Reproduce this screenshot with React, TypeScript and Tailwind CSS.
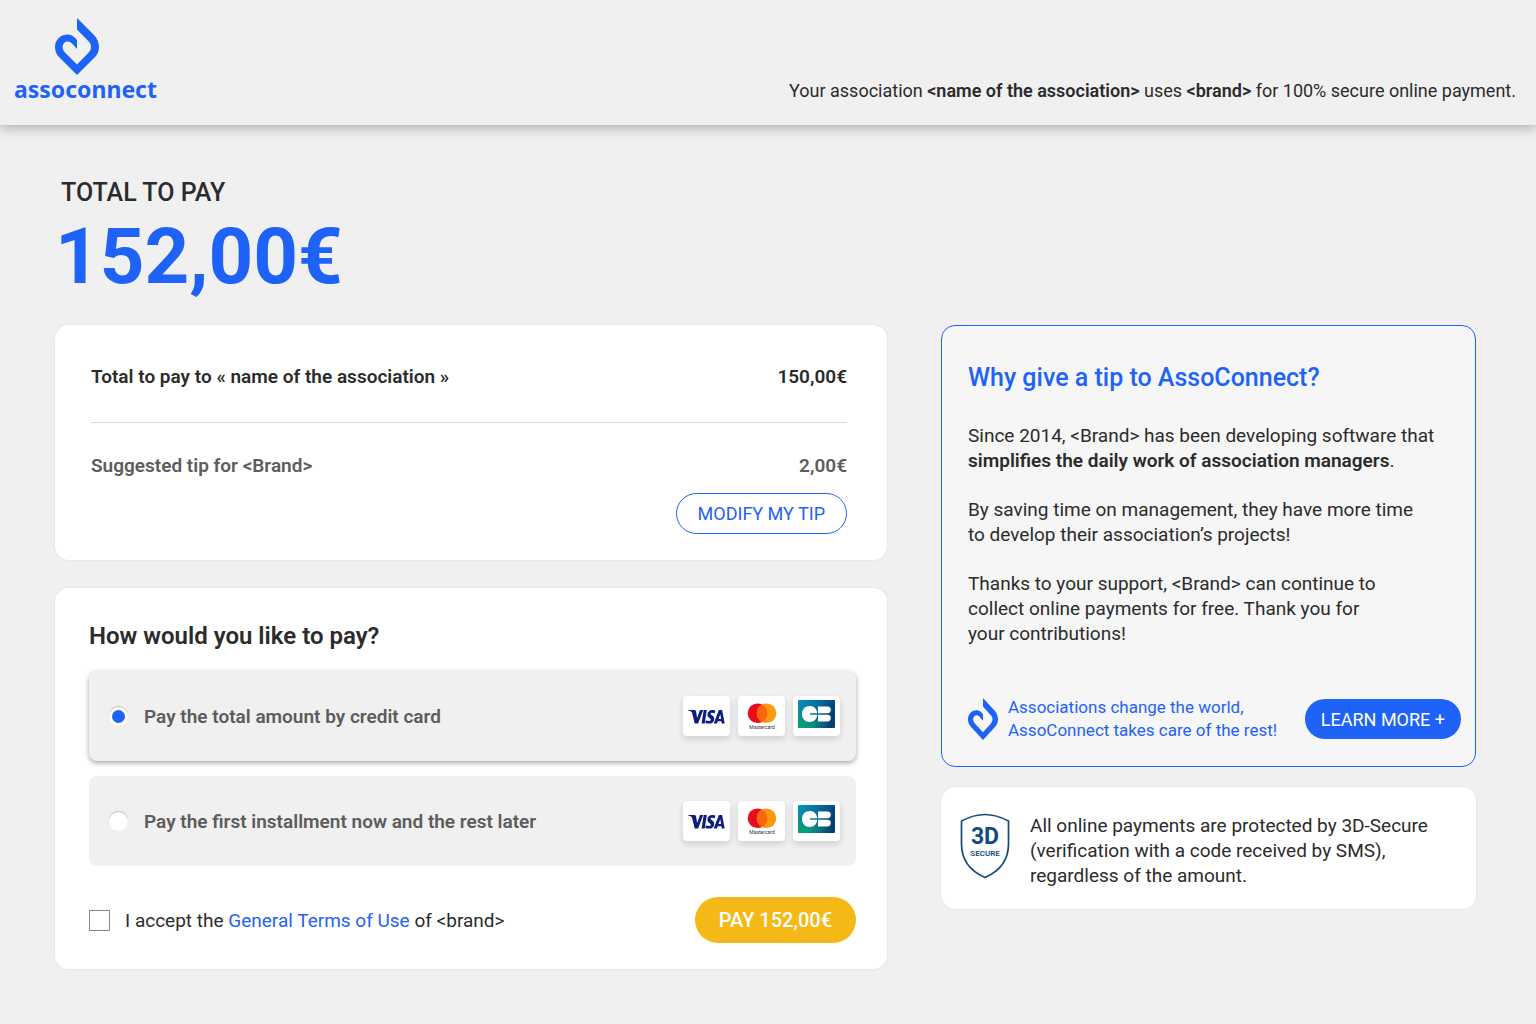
import React, { useState } from 'react';

type PaymentMode = 'full' | 'installments';

interface PaymentOptionProps {
  value: PaymentMode;
  label: string;
  checked: boolean;
  onSelect: (value: PaymentMode) => void;
}

const BrandMark: React.FC<{ className?: string }> = ({ className }) => (
  <svg className={className} viewBox="0 0 44 57" fill="#1f62f8" preserveAspectRatio="none" aria-hidden="true">
    <path d="M22 0 L38.500 16.500 C42.500 20.500 44 25 44 29 C44 33.500 42.500 36.500 39.500 39.500 L22 57 L4.500 39.500 C1.500 36.500 0 33 0 29 C0 22 5.500 16.500 12.300 16.500 C16.300 16.500 19.500 18.500 22 22 V31 L17.500 26 C16 24.300 14.300 23.500 12.500 23.500 C9.700 23.500 7.600 26 7.600 29 C7.600 31.200 8.500 33 10 34.600 L22 46.500 L33 35.200 C35 33.200 36 31.300 36 29 C36 26.700 35.200 25 33.500 23.300 L22 11.500 Z" />
  </svg>
);

const CardBadge: React.FC<{ children: React.ReactNode }> = ({ children }) => (
  <span className="flex h-10 w-[47px] items-center justify-center rounded bg-white shadow-[0_3px_6px_rgba(0,0,0,0.14)]">
    {children}
  </span>
);

const AcceptedCards: React.FC = () => (
  <span className="flex gap-2">
    <CardBadge>
      <svg className="mt-0.5" width="37" height="14" viewBox="0 0 37 14" fill="#0d1c80" role="img" aria-label="Visa">
        <path d="M0 0 H6.200 C7.300 0 7.900 .6 8.100 1.600 L9.100 8 L12 0 H15.200 L10.100 13.500 H6.700 L4.200 3.200 C3.800 1.600 1.800 1 0 .6 Z" />
        <path d="M15.700 0 H18.800 L16.700 13.500 H13.600 Z" />
        <path d="M27.300 .5 L26.800 3.300 C25.300 2.600 22.600 2.300 22.500 3.700 C22.400 5.100 26.400 5.400 26.200 8.900 C26 13.800 20.700 14.300 17.300 13 L17.800 10.200 C19.500 11.200 22.700 11.500 22.800 9.700 C22.900 8.200 19.200 8 19.400 4.600 C19.600 0 24.300 -.7 27.300 .5 Z" />
        <path fillRule="evenodd" d="M30.900 0 H34.100 L36.700 13.500 H33.800 L33.400 11.300 H29.700 L28.900 13.500 H25.700 Z M32.300 4.200 L30.500 8.900 H33.100 Z" />
      </svg>
    </CardBadge>
    <CardBadge>
      <svg width="30" height="28" viewBox="0 0 30 28" role="img" aria-label="Mastercard">
        <circle cx="10.500" cy="11.300" r="9.800" fill="#eb0a1e" />
        <circle cx="19.500" cy="11.300" r="9.800" fill="#fb9a0c" />
        <path d="M15 2.600 A9.800 9.800 0 0 1 15 20 A9.800 9.800 0 0 1 15 2.600 Z" fill="#fb6410" />
        <text x="15" y="26.500" textAnchor="middle" fontSize="5" fontFamily="Roboto, sans-serif" fill="#333">
          Mastercard
        </text>
      </svg>
    </CardBadge>
    <CardBadge>
      <svg className="mb-1" width="37" height="28" viewBox="0 0 37 28" role="img" aria-label="CB">
        <defs>
          <linearGradient id="cb" x1="0" y1="0" x2="1" y2="0.3">
            <stop offset="0" stopColor="#0793b5" />
            <stop offset="0.500" stopColor="#08719f" />
            <stop offset="1" stopColor="#073f73" />
          </linearGradient>
          <radialGradient id="cbGreen" cx="0.1" cy="1" r="0.8">
            <stop offset="0" stopColor="#07a270" />
            <stop offset="1" stopColor="#07a270" stopOpacity="0" />
          </radialGradient>
        </defs>
        <rect width="37" height="28" rx="1" fill="url(#cb)" />
        <rect width="37" height="28" rx="1" fill="url(#cbGreen)" />
        <path d="M12 6 C16 6 19 9 19.200 13.200 H12 V14.800 H19.200 C19 19 16 22 12 22 C7 22 4 18.500 4 14 C4 9.500 7 6 12 6 Z" fill="#fff" />
        <path d="M20 6.500 H29.500 C34 6.500 34 13.200 29.500 13.200 H20 Z M20 14.800 H29.500 C34 14.800 34 21.500 29.500 21.500 H20 Z" fill="#fff" />
      </svg>
    </CardBadge>
  </span>
);

const SecureShield: React.FC = () => (
  <svg className="shrink-0" width="50" height="66" viewBox="0 0 50 66" role="img" aria-label="3D Secure">
    <path
      d="M25 1.500 C32 1.500 40 3.500 48.500 8 V31 C48.500 47 41 57.500 25 64.500 C9 57.500 1.500 47 1.500 31 V8 C10 3.500 18 1.500 25 1.500 Z"
      fill="#fff"
      stroke="#174a7c"
      strokeWidth="1.700"
      strokeLinejoin="round"
    />
    <text x="25" y="31" textAnchor="middle" fontSize="23" fontWeight="700" fontFamily="Roboto, sans-serif" fill="#174a7c">
      3D
    </text>
    <text x="25" y="43" textAnchor="middle" fontSize="8" fontWeight="600" fontFamily="Roboto, sans-serif" fill="#174a7c">
      SECURE
    </text>
  </svg>
);

const PaymentOption: React.FC<PaymentOptionProps> = ({ value, label, checked, onSelect }) => (
  <label
    className={`flex h-[90px] cursor-pointer items-center rounded-lg bg-[#f0f0f0] pr-4 pl-5 ${
      checked ? 'shadow-[0_2px_5px_rgba(0,0,0,0.35)]' : ''
    }`}
  >
    <input
      type="radio"
      name="payment-mode"
      value={value}
      checked={checked}
      onChange={() => onSelect(value)}
      className="size-[19px] shrink-0 appearance-none rounded-full border-3 border-white bg-white shadow-[0_-1px_1px_rgba(0,0,0,0.2)] checked:bg-[#1f62f8]"
    />
    <span className="mr-auto ml-4 font-semibold text-[#5c5c5c]">{label}</span>
    <AcceptedCards />
  </label>
);

export default function App() {
  const [mode, setMode] = useState<PaymentMode>('full');
  const [accepted, setAccepted] = useState(false);

  return (
    <div className="min-h-screen bg-[#f0f0f0] font-[Roboto,sans-serif] text-[19px] leading-[25px] text-[#2b2b2b]">
      <header className="flex items-end justify-between pt-[18px] pr-5 pb-[22px] pl-3.5 shadow-[0_2px_12px_rgba(0,0,0,0.32)]">
        <a href="#" className="flex flex-col items-center">
          <BrandMark className="mr-4 h-[57px] w-11" />
          <span className="pt-0.5 pb-0.5 font-['Noto_Sans',sans-serif] text-[23px] leading-6 font-bold text-[#1f62f8]">
            assoconnect
          </span>
        </a>
        <p className="text-[18px]">
          Your association <b className="font-semibold">&lt;name of the association&gt;</b> uses{' '}
          <b className="font-semibold">&lt;brand&gt;</b> for 100% secure online payment.
        </p>
      </header>

      <main className="pt-[52px] pr-[60px] pb-[54px] pl-[55px]">
        <h1>
          <span className="block pl-1.5 text-[25px] leading-8 font-medium">TOTAL TO PAY</span>
          <span className="block text-[78px] leading-[96px] font-bold text-[#1f62f8]">152,00€</span>
        </h1>

        <div className="mt-5 grid grid-cols-[832fr_535fr] items-start gap-[54px]">
          <div className="flex flex-col gap-7">
            <section className="rounded-[14px] bg-white pt-[39px] pr-10 pb-[26px] pl-9 shadow-[0_0_3px_rgba(0,0,0,0.08)]">
              <div className="flex justify-between border-b border-[#d8d8d8] pb-[33px] font-semibold">
                <span>Total to pay to « name of the association »</span>
                <span>150,00€</span>
              </div>
              <div className="flex justify-between pt-[30px] font-semibold text-[#5c5c5c]">
                <span>Suggested tip for &lt;Brand&gt;</span>
                <span>2,00€</span>
              </div>
              <div className="mt-[15px] flex justify-end">
                <button type="button" className="h-[41px] rounded-full border border-[#1f62f8] px-[21px] text-[18px] text-[#1f62f8]">
                  MODIFY MY TIP
                </button>
              </div>
            </section>

            <section className="rounded-[14px] bg-white pt-8 pr-[31px] pb-[26px] pl-[34px] shadow-[0_0_3px_rgba(0,0,0,0.08)]">
              <h2 className="text-[24px] leading-8 font-semibold">How would you like to pay?</h2>
              <div className="mt-[19px] flex flex-col gap-[15px]">
                <PaymentOption value="full" label="Pay the total amount by credit card" checked={mode === 'full'} onSelect={setMode} />
                <PaymentOption
                  value="installments"
                  label="Pay the first installment now and the rest later"
                  checked={mode === 'installments'}
                  onSelect={setMode}
                />
              </div>
              <div className="mt-[31px] flex items-center justify-between">
                <div className="flex items-center gap-[15px]">
                  <input
                    id="terms"
                    type="checkbox"
                    checked={accepted}
                    onChange={(e) => setAccepted(e.target.checked)}
                    className="size-[21px] appearance-none border border-[#888] bg-white checked:bg-[#1f62f8]"
                  />
                  <label htmlFor="terms">
                    I accept the{' '}
                    <a href="#" className="text-[#1f62f8]">
                      General Terms of Use
                    </a>{' '}
                    of &lt;brand&gt;
                  </label>
                </div>
                <button type="button" className="h-[46px] rounded-full bg-[#f4b916] px-6 text-[20px] font-medium text-white">
                  PAY 152,00€
                </button>
              </div>
            </section>
          </div>

          <aside className="flex flex-col gap-5">
            <section className="rounded-[14px] border border-[#1f62f8] bg-[#f6f6f6] pt-9 pr-3.5 pb-6 pl-[26px]">
              <h2 className="text-[25px] leading-8 font-medium text-[#1f62f8]">Why give a tip to AssoConnect?</h2>
              <div className="mt-[29px] flex flex-col gap-6">
                <p>
                  Since 2014, &lt;Brand&gt; has been developing software that
                  <br />
                  <b className="font-semibold">simplifies the daily work of association managers</b>.
                </p>
                <p>
                  By saving time on management, they have more time
                  <br />
                  to develop their association’s projects!
                </p>
                <p>
                  Thanks to your support, &lt;Brand&gt; can continue to
                  <br />
                  collect online payments for free. Thank you for
                  <br />
                  your contributions!
                </p>
              </div>
              <div className="mt-[50px] flex items-center">
                <BrandMark className="h-[42px] w-[30px] shrink-0" />
                <p className="mr-auto ml-2.5 text-[17px] leading-[23px] text-[#1f62f8]">
                  Associations change the world,
                  <br />
                  AssoConnect takes care of the rest!
                </p>
                <button type="button" className="h-10 rounded-full bg-[#1f62f8] px-4 text-[18px] text-white">
                  LEARN MORE +
                </button>
              </div>
            </section>

            <section className="flex items-start gap-5 rounded-[14px] bg-white pt-[26px] pr-4 pb-[21px] pl-[19px] shadow-[0_0_3px_rgba(0,0,0,0.08)]">
              <SecureShield />
              <p>
                All online payments are protected by 3D-Secure
                <br />
                (verification with a code received by SMS),
                <br />
                regardless of the amount.
              </p>
            </section>
          </aside>
        </div>
      </main>
    </div>
  );
}
